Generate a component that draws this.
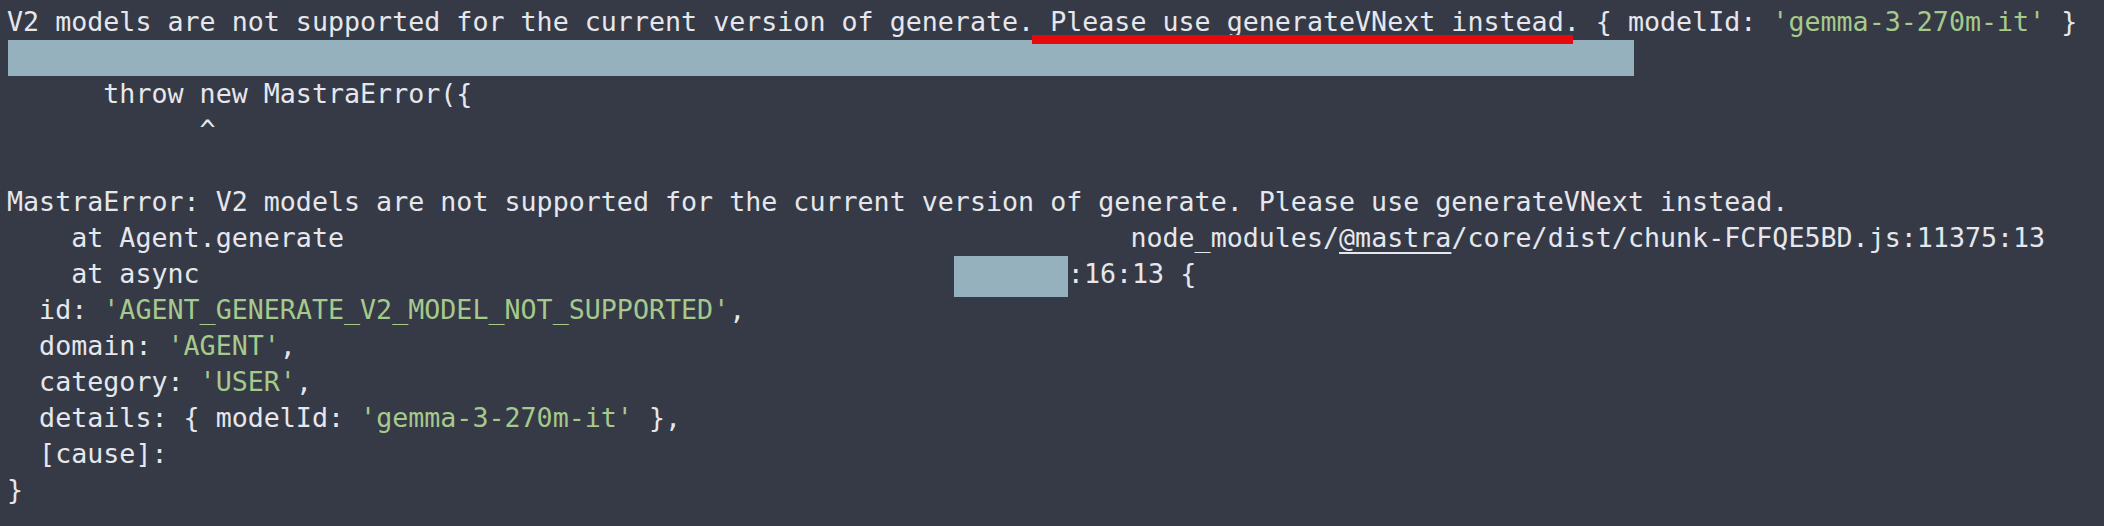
import React from "react";

const G = ({ children }: { children: React.ReactNode }) => (
  <span className="text-[#a6c98c]">{children}</span>
);

const Row = ({ children }: { children?: React.ReactNode }) => (
  <div className="h-[36px] leading-[36px] whitespace-pre">{children}</div>
);

export default function App() {
  const pad = (n: number) => " ".repeat(n);
  return (
    <div className="w-[2104px] h-[526px] overflow-hidden bg-[#353a46] text-[#e6e7ed] font-['DejaVu_Sans_Mono',monospace] text-[26.66px] pt-[4px] pl-[7px]">
      <div className="relative">
        <Row>
          V2 models are not supported for the current version of generate. Please use generateVNext instead. {"{"} modelId: <G>'gemma-3-270m-it'</G> {"}"}
        </Row>
        <div className="absolute left-[1025px] top-[31px] w-[541px] h-[9px] bg-[#e8090c]" />
      </div>
      <div className="h-[36px] ml-[1px] w-[1626px] bg-[#94b1bd]" />
      <Row>{"      throw new MastraError({"}</Row>
      <Row>{"            ^"}</Row>
      <Row />
      <Row>
        MastraError: V2 models are not supported for the current version of generate. Please use generateVNext instead.
      </Row>
      <Row>
        {"    at Agent.generate" + pad(49)}node_modules/
        <span className="underline underline-offset-[5px] decoration-[2px]">@mastra</span>
        /core/dist/chunk-FCFQE5BD.js:11375:13
      </Row>
      <Row>
        {"    at async" + pad(47)}
        <span className="inline-block align-top h-[41px] -mb-[5px] w-[114px] bg-[#95b1bd]" />
        {":16:13 {"}
      </Row>
      <Row>
        {"  id: "}
        <G>'AGENT_GENERATE_V2_MODEL_NOT_SUPPORTED'</G>,
      </Row>
      <Row>
        {"  domain: "}
        <G>'AGENT'</G>,
      </Row>
      <Row>
        {"  category: "}
        <G>'USER'</G>,
      </Row>
      <Row>
        {"  details: { modelId: "}
        <G>'gemma-3-270m-it'</G>
        {" },"}
      </Row>
      <Row>{"  [cause]:"}</Row>
      <Row>{"}"}</Row>
    </div>
  );
}
